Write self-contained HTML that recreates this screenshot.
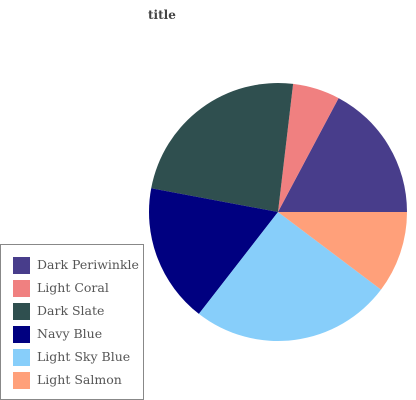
<!DOCTYPE html>
<html><head><style>
body{margin:0;width:416px;height:400px;background:#fff;overflow:hidden;position:relative;font-family:"DejaVu Serif","Liberation Serif",serif;}
.t{position:absolute;left:148px;top:8px;font-weight:bold;font-size:12px;color:#444;}
.lg{position:absolute;left:0;top:244px;width:142px;height:154px;border:1px solid #888;box-sizing:content-box;}
.r{position:absolute;left:12px;height:17px;}
.s{position:absolute;left:0;top:0;width:17px;height:17px;}
.l{position:absolute;left:24px;top:-1px;font-size:12.5px;color:#555;white-space:nowrap;line-height:18px;}
</style></head><body>
<div class="t">title</div>
<svg width="416" height="400" style="position:absolute;left:0;top:0">
<path d="M278,212 L407,212 A129,129 0 0 0 338.6,98.1 Z" fill="#483D8B"/>
<path d="M278,212 L338.6,98.1 A129,129 0 0 0 293.1,83.9 Z" fill="#F08080"/>
<path d="M278,212 L293.1,83.9 A129,129 0 0 0 151.2,188.3 Z" fill="#2F4F4F"/>
<path d="M278,212 L151.2,188.3 A129,129 0 0 0 198.9,313.9 Z" fill="#000080"/>
<path d="M278,212 L198.9,313.9 A129,129 0 0 0 381,289.6 Z" fill="#87CEFA"/>
<path d="M278,212 L381,289.6 A129,129 0 0 0 407,212 Z" fill="#FFA07A"/>
</svg>
<div class="lg">
<div class="r" style="top:12px"><div class="s" style="background:#483D8B"></div><div class="l">Dark Periwinkle</div></div>
<div class="r" style="top:35px"><div class="s" style="background:#F08080"></div><div class="l">Light Coral</div></div>
<div class="r" style="top:58px"><div class="s" style="background:#2F4F4F"></div><div class="l">Dark Slate</div></div>
<div class="r" style="top:81px"><div class="s" style="background:#000080"></div><div class="l">Navy Blue</div></div>
<div class="r" style="top:104px"><div class="s" style="background:#87CEFA"></div><div class="l">Light Sky Blue</div></div>
<div class="r" style="top:127px"><div class="s" style="background:#FFA07A"></div><div class="l">Light Salmon</div></div>
</div>
</body></html>
